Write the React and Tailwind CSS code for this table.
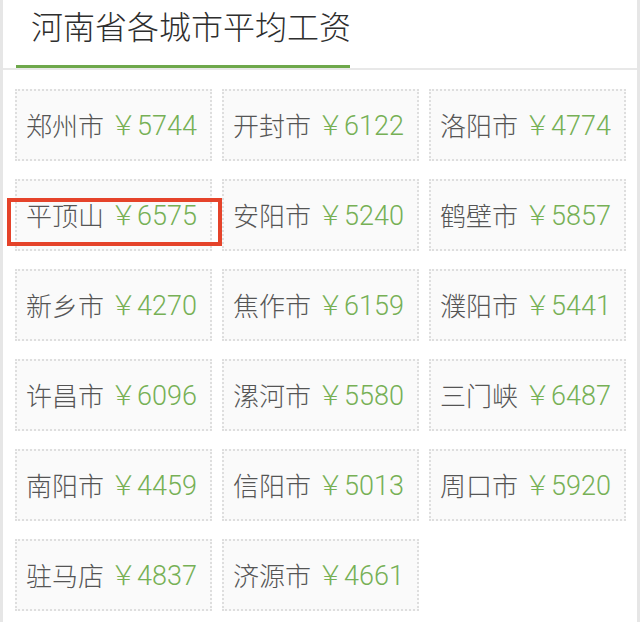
const cities = [
  ['郑州市', 5744], ['开封市', 6122], ['洛阳市', 4774],
  ['平顶山', 6575], ['安阳市', 5240], ['鹤壁市', 5857],
  ['新乡市', 4270], ['焦作市', 6159], ['濮阳市', 5441],
  ['许昌市', 6096], ['漯河市', 5580], ['三门峡', 6487],
  ['南阳市', 4459], ['信阳市', 5013], ['周口市', 5920],
  ['驻马店', 4837], ['济源市', 4661],
]

function CityCell({ name, wage, marked }) {
  return (
    <div className="relative h-[72px] flex items-center pl-[9px] pt-[3px] bg-[#fafafa] border-2 border-dotted border-[#dedede] whitespace-nowrap">
      <span className="text-[26px] leading-none font-light text-[#555]">{name}</span>
      <span className="ml-[6px] text-[27px] leading-none font-light text-[#76b055]">￥{wage}</span>
      {marked && (
        <div className="absolute left-[-10px] top-[17px] w-[215px] h-[48px] border-4 border-[#e5432a]" />
      )}
    </div>
  )
}

export default function App() {
  return (
    <div
      className="w-[640px] min-h-[622px] bg-white border-x-[3px] border-[#e6e6e6]"
      style={{ fontFamily: 'Roboto, "Noto Sans CJK SC", sans-serif' }}
    >
      <div className="h-[65px] pl-[28px] pt-[12px]">
        <h1 className="text-[32px] leading-[32px] font-light text-[#2e2e2e]">河南省各城市平均工资</h1>
      </div>
      <div className="border-b-2 border-[#e8e8e8]">
        <div className="ml-[13px] w-[334px] h-[3px] bg-[#6ea84b]" />
      </div>
      <div className="pl-[12px] pt-[19px] grid grid-cols-[197px_197px_197px] gap-x-[10px] gap-y-[18px]">
        {cities.map(([name, wage]) => (
          <CityCell key={name} name={name} wage={wage} marked={name === '平顶山'} />
        ))}
      </div>
    </div>
  )
}
